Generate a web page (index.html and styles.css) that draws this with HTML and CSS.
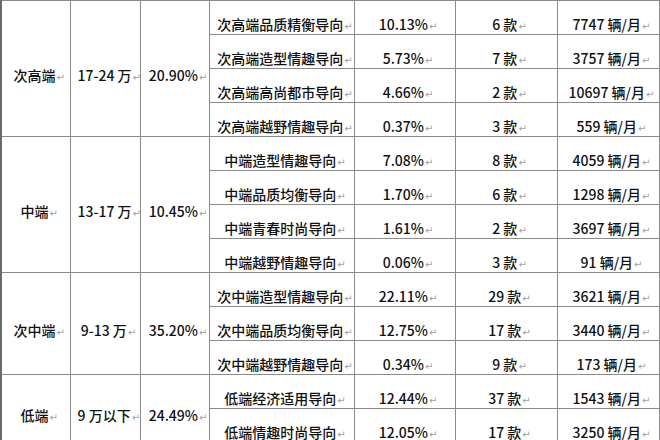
FILE: index.html
```html
<!DOCTYPE html>
<html lang="zh">
<head>
<meta charset="utf-8">
<link rel="stylesheet" href="styles.css">
</head>
<body>
<table class="sales">
  <colgroup>
    <col class="c1"><col class="c2"><col class="c3"><col class="c4"><col class="c5"><col class="c6"><col class="c7">
  </colgroup>
  <tbody>
    <tr>
      <td rowspan="4" class="first">次高端<span class="pm">↵</span></td>
      <td rowspan="4">17-24 万<span class="pm">↵</span></td>
      <td rowspan="4">20.90%<span class="pm">↵</span></td>
      <td>次高端品质精衡导向<span class="pm">↵</span></td>
      <td>10.13%<span class="pm">↵</span></td>
      <td>6 款<span class="pm">↵</span></td>
      <td>7747 辆/月<span class="pm">↵</span></td>
    </tr>
    <tr>
      <td>次高端造型情趣导向<span class="pm">↵</span></td>
      <td>5.73%<span class="pm">↵</span></td>
      <td>7 款<span class="pm">↵</span></td>
      <td>3757 辆/月<span class="pm">↵</span></td>
    </tr>
    <tr>
      <td>次高端高尚都市导向<span class="pm">↵</span></td>
      <td>4.66%<span class="pm">↵</span></td>
      <td>2 款<span class="pm">↵</span></td>
      <td>10697 辆/月<span class="pm">↵</span></td>
    </tr>
    <tr>
      <td>次高端越野情趣导向<span class="pm">↵</span></td>
      <td>0.37%<span class="pm">↵</span></td>
      <td>3 款<span class="pm">↵</span></td>
      <td>559 辆/月<span class="pm">↵</span></td>
    </tr>
    <tr>
      <td rowspan="4" class="first">中端<span class="pm">↵</span></td>
      <td rowspan="4">13-17 万<span class="pm">↵</span></td>
      <td rowspan="4">10.45%<span class="pm">↵</span></td>
      <td>中端造型情趣导向<span class="pm">↵</span></td>
      <td>7.08%<span class="pm">↵</span></td>
      <td>8 款<span class="pm">↵</span></td>
      <td>4059 辆/月<span class="pm">↵</span></td>
    </tr>
    <tr>
      <td>中端品质均衡导向<span class="pm">↵</span></td>
      <td>1.70%<span class="pm">↵</span></td>
      <td>6 款<span class="pm">↵</span></td>
      <td>1298 辆/月<span class="pm">↵</span></td>
    </tr>
    <tr>
      <td>中端青春时尚导向<span class="pm">↵</span></td>
      <td>1.61%<span class="pm">↵</span></td>
      <td>2 款<span class="pm">↵</span></td>
      <td>3697 辆/月<span class="pm">↵</span></td>
    </tr>
    <tr>
      <td>中端越野情趣导向<span class="pm">↵</span></td>
      <td>0.06%<span class="pm">↵</span></td>
      <td>3 款<span class="pm">↵</span></td>
      <td>91 辆/月<span class="pm">↵</span></td>
    </tr>
    <tr>
      <td rowspan="3" class="first">次中端<span class="pm">↵</span></td>
      <td rowspan="3">9-13 万<span class="pm">↵</span></td>
      <td rowspan="3">35.20%<span class="pm">↵</span></td>
      <td>次中端造型情趣导向<span class="pm">↵</span></td>
      <td>22.11%<span class="pm">↵</span></td>
      <td>29 款<span class="pm">↵</span></td>
      <td>3621 辆/月<span class="pm">↵</span></td>
    </tr>
    <tr>
      <td>次中端品质均衡导向<span class="pm">↵</span></td>
      <td>12.75%<span class="pm">↵</span></td>
      <td>17 款<span class="pm">↵</span></td>
      <td>3440 辆/月<span class="pm">↵</span></td>
    </tr>
    <tr>
      <td>次中端越野情趣导向<span class="pm">↵</span></td>
      <td>0.34%<span class="pm">↵</span></td>
      <td>9 款<span class="pm">↵</span></td>
      <td>173 辆/月<span class="pm">↵</span></td>
    </tr>
    <tr>
      <td rowspan="2" class="first">低端<span class="pm">↵</span></td>
      <td rowspan="2">9 万以下<span class="pm">↵</span></td>
      <td rowspan="2">24.49%<span class="pm">↵</span></td>
      <td>低端经济适用导向<span class="pm">↵</span></td>
      <td>12.44%<span class="pm">↵</span></td>
      <td>37 款<span class="pm">↵</span></td>
      <td>1543 辆/月<span class="pm">↵</span></td>
    </tr>
    <tr>
      <td>低端情趣时尚导向<span class="pm">↵</span></td>
      <td>12.05%<span class="pm">↵</span></td>
      <td>17 款<span class="pm">↵</span></td>
      <td>3250 辆/月<span class="pm">↵</span></td>
    </tr>
  </tbody>
</table>
</body>
</html>
```

FILE: styles.css
```css
html, body {
  margin: 0;
  padding: 0;
  background: #ffffff;
}

body {
  overflow: hidden;
  font-family: "Noto Sans CJK SC", "Noto Sans", sans-serif;
  font-size: 14px;
  font-weight: 500;
  color: #111111;
}

.sales {
  border-collapse: collapse;
  table-layout: fixed;
  width: 659px;
}

.c1 { width: 69px; }
.c2 { width: 70px; }
.c3 { width: 69px; }
.c4 { width: 145px; }
.c5 { width: 101px; }
.c6 { width: 102px; }
.c7 { width: 102px; }

.sales tr {
  height: 34px;
}

.sales td {
  border: 1px solid #8a8a8a;
  padding: 12px 0 0 7px;
  height: 21px;
  line-height: 18px;
  text-align: center;
  vertical-align: middle;
  white-space: nowrap;
  overflow: hidden;
}

.sales td.first {
  border-left: 2px solid #6a6a6a;
}

.pm {
  font-family: "DejaVu Sans", sans-serif;
  font-weight: normal;
  font-size: 10px;
  line-height: 0;
  color: #a0a0a8;
  margin-left: 1px;
}
```
